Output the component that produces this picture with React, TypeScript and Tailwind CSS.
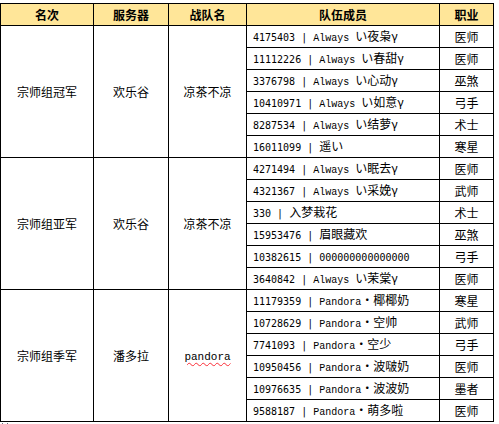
import React from "react";

type Member = { text: string; job: string };
type Group = { rank: string; server: string; team: string; members: Member[] };

const groups: Group[] = [
  {
    rank: "宗师组冠军",
    server: "欢乐谷",
    team: "凉茶不凉",
    members: [
      { text: "4175403 | Always い夜枭γ", job: "医师" },
      { text: "11112226 | Always い春甜γ", job: "医师" },
      { text: "3376798 | Always い心动γ", job: "巫煞" },
      { text: "10410971 | Always い如意γ", job: "弓手" },
      { text: "8287534 | Always い结萝γ", job: "术士" },
      { text: "16011099 | 遥い", job: "寒星" },
    ],
  },
  {
    rank: "宗师组亚军",
    server: "欢乐谷",
    team: "凉茶不凉",
    members: [
      { text: "4271494 | Always い眠去γ", job: "医师" },
      { text: "4321367 | Always い采娩γ", job: "武师" },
      { text: "330 | 入梦栽花", job: "术士" },
      { text: "15953476 | 眉眼藏欢", job: "巫煞" },
      { text: "10382615 | 000000000000000", job: "弓手" },
      { text: "3640842 | Always い茉棠γ", job: "医师" },
    ],
  },
  {
    rank: "宗师组季军",
    server: "潘多拉",
    team: "pandora",
    members: [
      { text: "11179359 | Pandora・椰椰奶", job: "寒星" },
      { text: "10728629 | Pandora・空帅", job: "武师" },
      { text: "7741093 | Pandora・空少", job: "弓手" },
      { text: "10950456 | Pandora・波啵奶", job: "医师" },
      { text: "10976635 | Pandora・波波奶", job: "墨者" },
      { text: "9588187 | Pandora・萌多啦", job: "医师" },
    ],
  },
];

// split mixed text so ascii runs get a narrow mono face like the original
function Mixed({ text }: { text: string }) {
  const parts = text.match(/[0-9 |]+|[A-Za-z]+|[^\x00-\x7f]+/g) || [];
  return (
    <>
      {parts.map((p, i) =>
        /^[0-9 |]+$/.test(p) ? (
          <span key={i} className="font-['DejaVu_Sans_Mono'] text-[10px] whitespace-pre">
            {p}
          </span>
        ) : /^[A-Za-z]+$/.test(p) ? (
          <span key={i} className="font-['Liberation_Mono'] text-[10px]">
            {p}
          </span>
        ) : (
          <span key={i}>{p}</span>
        )
      )}
    </>
  );
}

const cell = "border border-black h-[22px] p-0 align-middle";

export default function App() {
  return (
    <div className="w-[499px] h-[424px] bg-white pt-[3px] font-['Noto_Sans_CJK_SC',sans-serif] text-[12px] leading-none text-black overflow-hidden">
      <table className="border-collapse table-fixed w-[493px]">
        <colgroup>
          <col className="w-[93px]" />
          <col className="w-[75px]" />
          <col className="w-[78px]" />
          <col className="w-[193px]" />
          <col className="w-[54px]" />
        </colgroup>
        <thead>
          <tr className="bg-[#ffe699]">
            <th className={`${cell} font-bold`}>名次</th>
            <th className={`${cell} font-bold`}>服务器</th>
            <th className={`${cell} font-bold`}>战队名</th>
            <th className={`${cell} font-bold`}>队伍成员</th>
            <th className={`${cell} font-bold`}>职业</th>
          </tr>
        </thead>
        <tbody>
          {groups.map((g) =>
            g.members.map((m, i) => (
              <tr key={g.rank + i}>
                {i === 0 && (
                  <>
                    <td rowSpan={6} className={`${cell} text-center`}>
                      {g.rank}
                    </td>
                    <td rowSpan={6} className={`${cell} text-center`}>
                      {g.server}
                    </td>
                    <td rowSpan={6} className={`${cell} text-center`}>
                      {g.team === "pandora" ? (
                        <span className="font-['Liberation_Mono'] text-[11px] underline decoration-wavy decoration-red-500 decoration-1 underline-offset-2">
                          {g.team}
                        </span>
                      ) : (
                        g.team
                      )}
                    </td>
                  </>
                )}
                <td className={`${cell} pl-[6px] whitespace-nowrap`}>
                  <Mixed text={m.text} />
                </td>
                <td className={`${cell} text-center`}>{m.job}</td>
              </tr>
            ))
          )}
        </tbody>
      </table>
      <div className="flex gap-[4px] pl-[2px] pt-[1px]">
        <span className="w-[1px] h-[1px] bg-gray-500" />
        <span className="w-[1px] h-[1px] bg-gray-500" />
      </div>
    </div>
  );
}
